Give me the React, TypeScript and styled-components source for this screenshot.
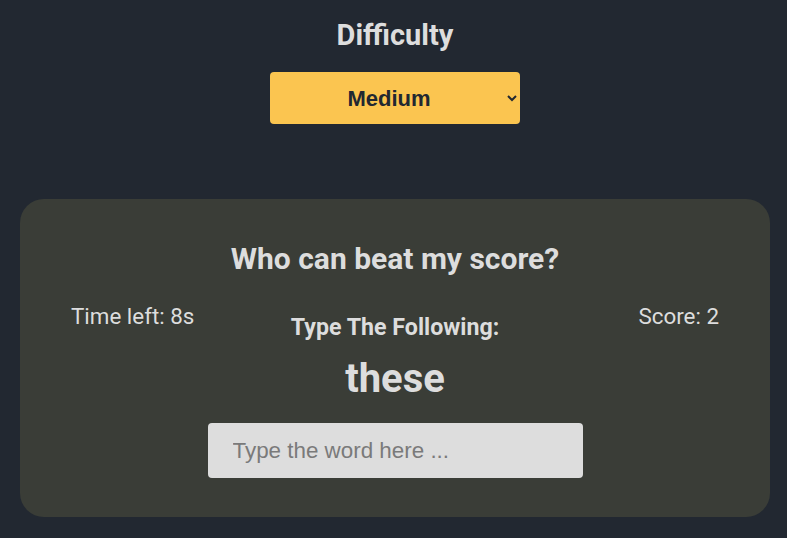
import React from "react";
import styled, { createGlobalStyle } from "styled-components";

const Global = createGlobalStyle`
  html, body { margin: 0; padding: 0; background: #222831; }
  body { font-family: Roboto, "Noto Sans", sans-serif; color: #dddddd; }
  * { box-sizing: border-box; }
`;

const Page = styled.div`
  display: flex;
  flex-direction: column;
  align-items: center;
  padding: 18px 17px 21px 20px;
`;

const Heading = styled.h2<{ $size: number }>`
  margin: 0;
  font-family: Roboto, sans-serif;
  font-weight: 700;
  font-size: ${(p) => p.$size}px;
  line-height: 34px;
  color: #dddddd;
  text-align: center;
`;

const Select = styled.select`
  margin-top: 20px;
  width: 250px;
  height: 52px;
  background: #fbc550;
  color: #222831;
  border: none;
  border-radius: 4px;
  font-family: "Liberation Sans", Arial, sans-serif;
  font-weight: 700;
  font-size: 22px;
  text-align: center;
  text-align-last: center;
  padding: 0 6px;
  outline: none;
`;

const Card = styled.section`
  margin-top: 75px;
  width: 100%;
  background: #3a3d37;
  border-radius: 24px;
  padding: 43px 51px 39px;
  display: flex;
  flex-direction: column;
  align-items: center;
`;

const Row = styled.div`
  margin-top: 26px;
  width: 100%;
  display: grid;
  grid-template-columns: 1fr auto 1fr;
  align-items: start;
`;

const Stat = styled.div<{ $align: "left" | "right" }>`
  font-family: Roboto, sans-serif;
  font-size: 22.4px;
  line-height: 28px;
  color: #dddddd;
  text-align: ${(p) => p.$align};
`;

const Middle = styled.div`
  padding-top: 11px;
  display: flex;
  flex-direction: column;
  align-items: center;
`;

const Label = styled.div`
  font-family: Roboto, sans-serif;
  font-weight: 700;
  font-size: 23.2px;
  line-height: 28px;
`;

const Word = styled.div`
  font-family: Roboto, sans-serif;
  font-weight: 700;
  font-size: 40px;
  line-height: 48px;
  margin-top: 14px;
`;

const Input = styled.input`
  margin-top: 20px;
  width: 375px;
  height: 55px;
  background: #dddddd;
  border: none;
  border-radius: 4px;
  padding: 0 25px;
  font-family: "Liberation Sans", Arial, sans-serif;
  font-size: 22.4px;
  color: #222831;
  outline: none;
  &::placeholder { color: #7a7a7a; }
`;

export default function App() {
  return (
    <>
      <Global />
      <Page>
        <Heading $size={29}>Difficulty</Heading>
        <Select defaultValue="medium">
          <option value="easy">Easy</option>
          <option value="medium">Medium</option>
          <option value="hard">Hard</option>
        </Select>
        <Card>
          <Heading $size={30}>Who can beat my score?</Heading>
          <Row>
            <Stat $align="left">Time left: 8s</Stat>
            <Middle>
              <Label>Type The Following:</Label>
              <Word>these</Word>
              <Input placeholder="Type the word here ..." />
            </Middle>
            <Stat $align="right">Score: 2</Stat>
          </Row>
        </Card>
      </Page>
    </>
  );
}
